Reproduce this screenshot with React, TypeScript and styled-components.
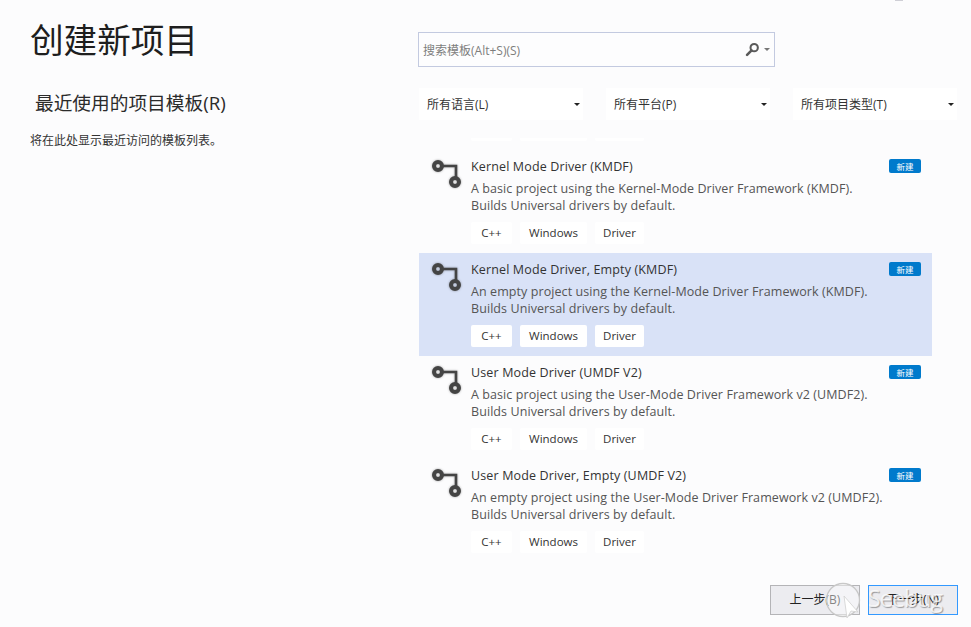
import styled, { createGlobalStyle } from "styled-components";

interface ITemplate {
  title: string;
  description: string;
  selected?: boolean;
}

const templates: ITemplate[] = [
  {
    title: "Kernel Mode Driver (KMDF)",
    description: "A basic project using the Kernel-Mode Driver Framework (KMDF).",
  },
  {
    title: "Kernel Mode Driver, Empty (KMDF)",
    description: "An empty project using the Kernel-Mode Driver Framework (KMDF).",
    selected: true,
  },
  {
    title: "User Mode Driver (UMDF V2)",
    description: "A basic project using the User-Mode Driver Framework v2 (UMDF2).",
  },
  {
    title: "User Mode Driver, Empty (UMDF V2)",
    description: "An empty project using the User-Mode Driver Framework v2 (UMDF2).",
  },
];

const tags = [
  { label: "C++", width: 41 },
  { label: "Windows", width: 67 },
  { label: "Driver", width: 49 },
];
const filters = ["所有语言(L)", "所有平台(P)", "所有项目类型(T)"];

function DriverIcon() {
  return (
    <IconSvg viewBox="0 0 34 30" width="34" height="30">
      <g fill="none" stroke="#444">
        <path d="M9 6H24V17" strokeWidth="2.6" />
        <circle cx="6" cy="6" r="4" strokeWidth="4" />
        <circle cx="23" cy="22" r="4" strokeWidth="4" />
      </g>
    </IconSvg>
  );
}

function TemplateItem({ data }: { data: ITemplate }) {
  return (
    <ItemLayout $selected={data.selected}>
      <DriverIcon />
      <ItemBody>
        <ItemTitle>{data.title}</ItemTitle>
        <ItemDescription>
          {data.description}
          <br />
          Builds Universal drivers by default.
        </ItemDescription>
        <TagRow>
          {tags.map((tag) => (
            <Tag key={tag.label} $width={tag.width}>
              {tag.label}
            </Tag>
          ))}
        </TagRow>
      </ItemBody>
      <NewBadge>新建</NewBadge>
    </ItemLayout>
  );
}

export default function App() {
  return (
    <>
      <GlobalStyle />
      <Page>
        <LeftColumn>
          <PageTitle>创建新项目</PageTitle>
          <SectionTitle>最近使用的项目模板(R)</SectionTitle>
          <SectionNote>将在此处显示最近访问的模板列表。</SectionNote>
        </LeftColumn>
        <RightColumn>
          <SearchBox>
            <SearchHint>搜索模板(Alt+S)(S)</SearchHint>
            <svg viewBox="0 0 16 16" width="15" height="15">
              <circle cx="9.8" cy="6" r="3.9" fill="none" stroke="#5a5a5a" strokeWidth="2.2" />
              <path d="M7 9 2.2 13.8" stroke="#5a5a5a" strokeWidth="2.8" strokeLinecap="round" />
            </svg>
            <SearchCaret />
          </SearchBox>
          <FilterRow>
            {filters.map((filter) => (
              <Filter key={filter}>
                {filter}
                <FilterCaret />
              </Filter>
            ))}
          </FilterRow>
          <ClippedTags>
            {tags.map((tag) => (
              <ClippedTag key={tag.label} $width={tag.width} />
            ))}
          </ClippedTags>
          <TemplateList>
            {templates.map((template) => (
              <TemplateItem key={template.title} data={template} />
            ))}
          </TemplateList>
          <Footer>
            <FooterButton>上一步(B)</FooterButton>
            <FooterButton $primary>下一步(N)</FooterButton>
          </Footer>
        </RightColumn>
        <TopMark />
        <Watermark>
          <svg viewBox="0 0 36 40" width="36" height="40">
            <circle cx="18" cy="20" r="16.5" fill="#fff" fillOpacity="0.45" stroke="#c8c8c8" strokeWidth="1.3" />
            <path d="M19 16 33 32 26 31 22 38Z" fill="#fff" stroke="#d0d0d0" strokeWidth="0.8" />
          </svg>
          <WatermarkText>Seebug</WatermarkText>
        </Watermark>
      </Page>
    </>
  );
}

const GlobalStyle = createGlobalStyle`
  html, body {
    margin: 0;
    padding: 0;
    background: #fcfcfd;
  }
  body {
    font-family: "Open Sans", "Noto Sans CJK SC", sans-serif;
    overflow: hidden;
  }
`;

const Page = styled.div`
  position: relative;
  display: flex;
  width: 971px;
  height: 627px;
  overflow: hidden;
  background: #fcfcfd;
`;

const LeftColumn = styled.div`
  width: 418px;
  flex: none;
  box-sizing: border-box;
  padding: 17px 0 0 30px;
`;

const PageTitle = styled.h1`
  margin: 0;
  font-size: 33.6px;
  line-height: 44px;
  font-weight: 400;
  color: #1e1e1e;
  font-family: "Noto Sans CJK SC", sans-serif;
`;

const SectionTitle = styled.h2`
  margin: 27px 0 0 5px;
  font-size: 18.7px;
  line-height: 30px;
  font-weight: 400;
  color: #2b2b2b;
`;

const SectionNote = styled.p`
  margin: 14px 0 0;
  font-size: 12px;
  line-height: 18px;
  color: #333;
`;

const RightColumn = styled.div`
  flex: 1;
  display: flex;
  flex-direction: column;
  padding-top: 32px;
`;

const SearchBox = styled.div`
  display: flex;
  align-items: center;
  box-sizing: border-box;
  width: 357px;
  height: 35px;
  padding: 0 4px 0 4px;
  border: 1px solid #c3cae0;
  background: #fdfdfe;
`;

const SearchHint = styled.span`
  flex: 1;
  font-size: 12px;
  color: #7d7d7d;
`;

const SearchCaret = styled.span`
  margin-left: 4px;
  border-left: 3px solid transparent;
  border-right: 3px solid transparent;
  border-top: 3px solid #777;
`;

const FilterRow = styled.div`
  display: flex;
  gap: 23px;
  margin: 21px 0 0 1px;
`;

const Filter = styled.div`
  display: flex;
  align-items: center;
  justify-content: space-between;
  box-sizing: border-box;
  width: 164px;
  height: 32px;
  padding: 0 3px 0 8px;
  background: #fff;
  font-size: 12px;
  color: #333;
`;

const FilterCaret = styled.span`
  border-left: 3px solid transparent;
  border-right: 3px solid transparent;
  border-top: 3px solid #222;
`;

const ClippedTags = styled.div`
  display: flex;
  gap: 8px;
  height: 3px;
  margin: 18px 0 0 53px;
`;

const ClippedTag = styled.div<{ $width: number }>`
  width: ${(props) => props.$width}px;
  height: 3px;
  background: #fff;
  border-radius: 0 0 2px 2px;
`;

const TemplateList = styled.div`
  display: flex;
  flex-direction: column;
  width: 513px;
  margin: 9px 0 0 1px;
`;

const ItemLayout = styled.div<{ $selected?: boolean }>`
  position: relative;
  display: flex;
  box-sizing: border-box;
  height: 103px;
  padding: 7px 0 0 13px;
  background: ${(props) => (props.$selected ? "#d9e2f7" : "transparent")};
`;

const IconSvg = styled.svg`
  flex: none;
  margin: 3px 5px 0 0;
  filter: drop-shadow(0 0 1px rgba(0, 0, 0, 0.35));
`;

const ItemBody = styled.div`
  display: flex;
  flex-direction: column;
`;

const ItemTitle = styled.div`
  font-size: 12.5px;
  line-height: 20px;
  color: #333;
  letter-spacing: 0.14px;
`;

const ItemDescription = styled.div`
  margin-top: 3px;
  font-size: 12.5px;
  line-height: 17px;
  color: #555;
  letter-spacing: 0.08px;
`;

const TagRow = styled.div`
  display: flex;
  gap: 8px;
  margin-top: 8px;
`;

const Tag = styled.span<{ $width: number }>`
  width: ${(props) => props.$width}px;
  height: 22px;
  border-radius: 2px;
  background: #fff;
  font-size: 11.5px;
  line-height: 22px;
  text-align: center;
  color: #333;
`;

const NewBadge = styled.span`
  position: absolute;
  top: 9px;
  right: 11px;
  width: 32px;
  height: 14px;
  border-radius: 2px;
  background: #007acc;
  color: #fff;
  font-family: "Noto Sans CJK SC", sans-serif;
  font-size: 8.5px;
  line-height: 14px;
  text-align: center;
`;

const Footer = styled.div`
  display: flex;
  justify-content: flex-end;
  gap: 8px;
  margin-top: 23px;
  padding-right: 13px;
`;

const FooterButton = styled.div<{ $primary?: boolean }>`
  box-sizing: border-box;
  width: 90px;
  height: 30px;
  border: 1px solid ${(props) => (props.$primary ? "#3399ff" : "#b4b4b7")};
  background: #ececf0;
  font-size: 12px;
  line-height: 28px;
  text-align: center;
  color: #222;
`;

const TopMark = styled.div`
  position: absolute;
  top: 0;
  left: 895px;
  width: 8px;
  height: 1px;
  background: #cfcfd6;
`;

const Watermark = styled.div`
  position: absolute;
  top: 580px;
  left: 825px;
  display: flex;
  align-items: flex-start;
`;

const WatermarkText = styled.span`
  margin: 3px 0 0 7px;
  font-size: 23px;
  line-height: 30px;
  color: rgba(255, 255, 255, 0.8);
  text-shadow: 1px 1px 1px rgba(0, 0, 0, 0.35);
  letter-spacing: -0.8px;
`;
